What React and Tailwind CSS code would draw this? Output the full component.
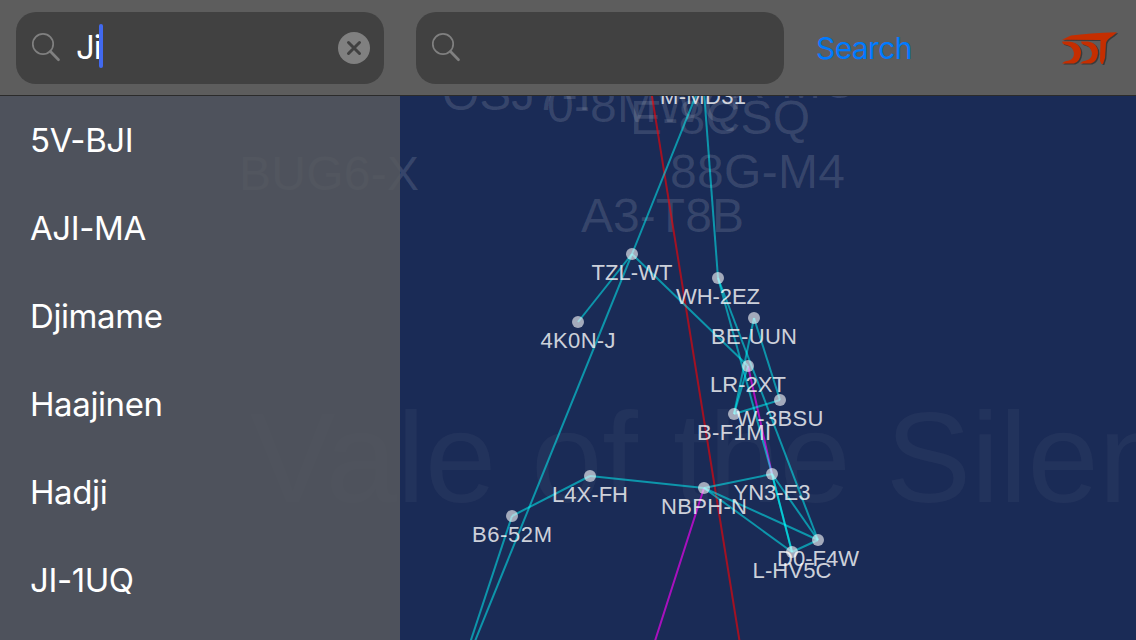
const nodes = [
  [632, 254, 'TZL-WT', 81], [718, 278, 'WH-2EZ', 84], [754, 318, 'BE-UUN', 86], [578, 322, '4K0N-J', 75],
  [748, 366, 'LR-2XT', 76], [780, 400, 'W-3BSU', 87], [734, 414, 'B-F1MI', 74], [590, 476, 'L4X-FH', 76],
  [704, 488, 'NBPH-N', 86], [772, 474, 'YN3-E3', 77], [512, 516, 'B6-52M', 80], [818, 540, 'D0-F4W', 82],
  [792, 552, 'L-HV5C', 79], [703, 78, 'M-MD31', 86],
];

const routes = [
  [703, 78, 632, 254], [703, 78, 718, 278], [632, 254, 578, 322], [632, 254, 748, 366],
  [632, 254, 473, 646], [718, 278, 772, 474], [718, 278, 818, 540], [754, 318, 734, 414],
  [754, 318, 780, 400], [748, 366, 734, 414], [734, 414, 780, 400], [512, 516, 590, 476],
  [590, 476, 704, 488], [704, 488, 772, 474], [704, 488, 818, 540], [704, 488, 792, 552],
  [772, 474, 818, 540], [772, 474, 792, 552], [772, 474, 792, 552], [792, 552, 818, 540],
  [512, 516, 469, 646],
];

const regions = [
  [442, 110, 'OSJ7-I', 149], [547, 122, '0-8MWQ', 193], [630, 134, 'E-8CSQ', 180],
  [670, 188, '88G-M4', 175], [581, 232, 'A3-T8B', 163], [239, 190, 'BUG6-X', 180],
  [732, 98, 'X-MC', 124],
];

const results = ['5V-BJI', 'AJI-MA', 'Djimame', 'Haajinen', 'Hadji', 'JI-1UQ'];

function StarMap() {
  return (
    <svg className="absolute inset-0 font-['Liberation_Sans',sans-serif]" width="1136" height="544" viewBox="0 96 1136 544">
      <text x="250" y="502" fontSize="128" fill="#fff" fillOpacity="0.04" textLength="955">Vale of the Silent</text>
      {regions.map(([x, y, t, w]) => (
        <text key={t} x={x} y={y} fontSize="48" fill="#fff" fillOpacity="0.13" textLength={w}>{t}</text>
      ))}
      <g strokeWidth="2" fill="none">
        <path d="M651 90L740 644" stroke="#ff0000" strokeOpacity="0.6" />
        <path d="M748 366L772 474M704 488L654 644" stroke="#ff00ff" strokeOpacity="0.62" />
        {routes.map(([a, b, c, d], i) => (
          <line key={i} x1={a} y1={b} x2={c} y2={d} stroke="#00ffff" strokeOpacity="0.5" />
        ))}
      </g>
      {nodes.map(([x, y, t, w]) => (
        <g key={t} fill="#fff">
          <circle cx={x} cy={y} r="6" fillOpacity="0.6" />
          <text x={x} y={y + 26} fontSize="22" textAnchor="middle" fillOpacity="0.8" textLength={w}>{t}</text>
        </g>
      ))}
    </svg>
  );
}

function Magnifier() {
  return (
    <svg className="h-8 w-8 shrink-0" viewBox="0 0 32 32" fill="none" stroke="#808080">
      <circle cx="13" cy="12" r="10.2" strokeWidth="1.7" />
      <path d="M20.5 19.5L28.500 27.700" strokeWidth="2.7" strokeLinecap="round" />
    </svg>
  );
}

function LogoShapes() {
  return (
    <>
      <path d="M7 11.800L16 7.500Q34 5 62 4.200L58 7.800Q52 11 51 15L50 30L48 36H46.500L45 33L45.500 12Z" />
      <path d="M7 13.500H14Q26 15 26 25Q25 34 19 35.500H7Q9 33 14 32.500Q19 31 19 25Q18 19 13 17.500L8 16Z" />
      <path d="M26 13.500H33Q43 15 43 25Q42 34 36 35.500H25Q27 33 31 32.500Q37 31 37 25Q36 19 31 17.500L27 16Z" />
    </>
  );
}

function Logo() {
  return (
    <svg className="h-10 w-16" viewBox="0 0 64 40">
      <g fill="#3a3a3a" transform="translate(1.3 1)">
        <LogoShapes />
      </g>
      <g fill="#c52e00">
        <LogoShapes />
      </g>
    </svg>
  );
}

export default function App() {
  return (
    <div className="flex h-[640px] w-[1136px] flex-col overflow-hidden bg-[#1a2b56] font-['Inter',sans-serif]">
      <header className="flex h-24 shrink-0 items-start border-b border-[#2b2b2b] bg-[#5d5d5d] pl-4 pt-3">
        <div className="flex h-[72px] w-[368px] items-center rounded-[20px] bg-[#414141] px-[14px]">
          <Magnifier />
          <span className="-mt-[3px] ml-[14px] text-[33px] leading-[44px] tracking-[-1.2px] text-white">Ji</span>
          <span className="-ml-px -mt-1 h-11 w-1 rounded-sm bg-[#4169ef]" />
          <svg className="ml-auto h-8 w-8" viewBox="0 0 32 32">
            <circle cx="16" cy="16" r="16" fill="#808080" />
            <path d="M10.500 10.500L21.500 21.500M21.500 10.500L10.500 21.500" stroke="#414141" strokeWidth="3" strokeLinecap="round" />
          </svg>
        </div>
        <div className="ml-8 flex h-[72px] w-[368px] items-center rounded-[20px] bg-[#414141] pl-[14px]">
          <Magnifier />
        </div>
        <button className="ml-8 mt-[14px] text-[30px] leading-[44px] tracking-[-0.6px] text-[#007aff]">Search</button>
        <div className="ml-auto mr-[17px] mt-4">
          <Logo />
        </div>
      </header>
      <main className="relative flex-1">
        <StarMap />
        <ul className="relative h-full w-[400px] bg-[#56585d]/87 pt-px">
          {results.map((name) => (
            <li key={name} className="flex h-[88px] items-center pl-[30px] text-[33px] tracking-[-0.4px] text-white">{name}</li>
          ))}
        </ul>
      </main>
    </div>
  );
}
